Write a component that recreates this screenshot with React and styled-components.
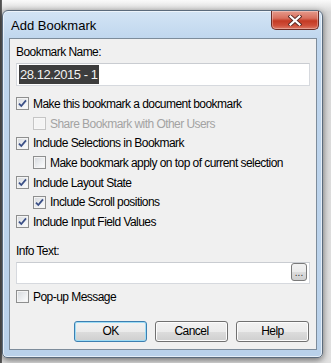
import React from "react";
import styled, { createGlobalStyle } from "styled-components";

const GlobalStyle = createGlobalStyle`
  body {
    margin: 0;
    font-family: "Liberation Sans", Arial, sans-serif;
  }
`;

const Page = styled.div`
  width: 331px;
  height: 363px;
  overflow: hidden;
  box-sizing: border-box;
  padding: 10px 0 0 2px;
  background: linear-gradient(to right, #4a4a4a 0, #6a6a6a 2px, transparent 2px),
    linear-gradient(to bottom, #fafafa 0, #d9d9d9 12px, #e2e2e2 100%);
`;

const Window = styled.div`
  width: 321px;
  height: 348px;
  box-sizing: border-box;
  border: 1px solid #5b6b7c;
  border-radius: 6px 6px 5px 5px;
  background: linear-gradient(to bottom, #d3e4f5 0, #bed5ed 30px, #b9d1ea 100%);
  box-shadow: 0 2px 7px rgba(0, 0, 0, 0.55), inset 0 0 0 1px rgba(255, 255, 255, 0.6);
  display: flex;
  flex-direction: column;
`;

const TitleBar = styled.div`
  height: 27px;
  display: flex;
  justify-content: space-between;
  align-items: flex-start;
  padding: 0 3px 0 8px;
`;

const Title = styled.span`
  align-self: center;
  font-size: 13px;
  color: #000;
  margin-top: 1px;
`;

const CloseButton = styled.div`
  width: 48px;
  height: 19px;
  box-sizing: border-box;
  border: 1px solid #6d2c25;
  border-top: none;
  border-radius: 0 0 5px 5px;
  background: linear-gradient(to bottom, #e59a8b 0, #d8705e 40%, #c43a24 55%, #cf4f3a 80%, #dc7a66 100%);
  box-shadow: inset 0 0 0 1px rgba(255, 255, 255, 0.3);
  display: flex;
  align-items: center;
  justify-content: center;
`;

const Client = styled.div`
  flex: 1;
  margin: 0 5px 7px 6px;
  border: 1px solid #7d8c9b;
  background: #f0f0f0;
  padding: 6px 6px 0 6px;
  font-size: 12px;
  letter-spacing: -0.55px;
  color: #000;
  display: flex;
  flex-direction: column;
`;

const Label = styled.div`
  line-height: 15px;
  height: 15px;
  margin-top: ${(p) => p.$top || 0}px;
`;

const TextBox = styled.div`
  height: ${(p) => p.$h}px;
  margin-top: 3px;
  box-sizing: border-box;
  border: 1px solid #d6d9de;
  border-top-color: #c9ccd1;
  background: #fff;
  display: flex;
  align-items: center;
  justify-content: space-between;
  padding: 0 2px;
`;

const Selected = styled.span`
  background: #3d3d3d;
  color: #f2f2f2;
  font-size: 13px;
  letter-spacing: -0.45px;
  line-height: 19px;
  padding: 0 1px;
`;

const BrowseButton = styled.div`
  width: 16px;
  height: 18px;
  box-sizing: border-box;
  border: 1px solid #7a7a7a;
  border-radius: 3px;
  background: linear-gradient(to bottom, #f2f2f2 0, #ebebeb 50%, #dddddd 50%, #cfcfcf 100%);
  font-size: 10px;
  letter-spacing: 0;
  line-height: 18px;
  text-align: center;
  color: #333;
  margin-top: -1px;
`;

const Rows = styled.div`
  margin-top: ${(p) => p.$top}px;
  display: flex;
  flex-direction: column;
`;

const Row = styled.div`
  height: 19.7px;
  display: flex;
  align-items: center;
  gap: 4px;
  padding-left: ${(p) => (p.$indent ? 17 : 0)}px;
  color: ${(p) => (p.$disabled ? "#a3a3a3" : "#000")};
`;

const Box = styled.span`
  width: 13px;
  height: 13px;
  box-sizing: border-box;
  border: 1px solid ${(p) => (p.$disabled ? "#c5c5c5" : "#8e8f8f")};
  background: ${(p) =>
    p.$disabled
      ? "#f4f4f4"
      : "linear-gradient(135deg, #d5d8dc 0, #eef0f2 60%, #ffffff 100%)"};
  box-shadow: inset 0 0 0 1px ${(p) => (p.$disabled ? "#f7f7f7" : "#f4f4f4")};
  display: flex;
  align-items: center;
  justify-content: center;
  flex: none;
`;

const ButtonBar = styled.div`
  margin-top: 14px;
  padding-right: 1px;
  display: flex;
  justify-content: flex-end;
  gap: 8px;
`;

const Button = styled.div`
  width: 73px;
  height: 21px;
  box-sizing: border-box;
  border: 1px solid ${(p) => (p.$default ? "#3c7fb1" : "#707070")};
  border-radius: 3px;
  background: linear-gradient(to bottom, #f2f2f2 0, #ebebeb 50%, #dddddd 50%, #cfcfcf 100%);
  box-shadow: inset 0 0 0 1px ${(p) => (p.$default ? "#9edcf5" : "#fcfcfc")};
  font-size: 12px;
  line-height: 19px;
  text-align: center;
  color: #000;
`;

const Check = () => (
  <svg width="9" height="9" viewBox="0 0 9 9">
    <path d="M1 4.6 L3.3 7 L8 1.4" fill="none" stroke="#3a4f86" strokeWidth="1.8" />
  </svg>
);

const CloseX = () => (
  <svg width="14" height="11" viewBox="0 0 14 11">
    <path d="M2.5 1.5 L11.5 9.5 M11.5 1.5 L2.5 9.5" stroke="#5a2a24" strokeWidth="4" strokeLinecap="square" />
    <path d="M2.5 1.5 L11.5 9.5 M11.5 1.5 L2.5 9.5" stroke="#ffffff" strokeWidth="2.2" strokeLinecap="square" />
  </svg>
);

const options = [
  { text: "Make this bookmark a document bookmark", checked: true },
  { text: "Share Bookmark with Other Users", indent: true, disabled: true },
  { text: "Include Selections in Bookmark", checked: true },
  { text: "Make bookmark apply on top of current selection", indent: true },
  { text: "Include Layout State", checked: true },
  { text: "Include Scroll positions", indent: true, checked: true },
  { text: "Include Input Field Values", checked: true },
];

const Option = ({ text, checked, indent, disabled }) => (
  <Row $indent={indent} $disabled={disabled}>
    <Box $disabled={disabled}>{checked && <Check />}</Box>
    {text}
  </Row>
);

export default function App() {
  return (
    <>
      <GlobalStyle />
      <Page>
        <Window>
          <TitleBar>
            <Title>Add Bookmark</Title>
            <CloseButton>
              <CloseX />
            </CloseButton>
          </TitleBar>
          <Client>
            <Label>Bookmark Name:</Label>
            <TextBox $h={23}>
              <Selected>28.12.2015 - 1</Selected>
            </TextBox>
            <Rows $top={8}>
              {options.map((o) => (
                <Option key={o.text} {...o} />
              ))}
            </Rows>
            <Label $top={12}>Info Text:</Label>
            <TextBox $h={22}>
              <span />
              <BrowseButton>...</BrowseButton>
            </TextBox>
            <Rows $top={3}>
              <Option text="Pop-up Message" />
            </Rows>
            <ButtonBar>
              <Button $default>OK</Button>
              <Button>Cancel</Button>
              <Button>Help</Button>
            </ButtonBar>
          </Client>
        </Window>
      </Page>
    </>
  );
}
